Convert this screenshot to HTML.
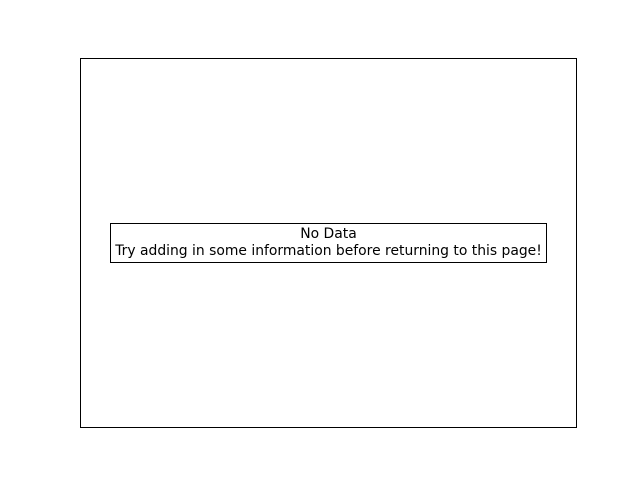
<!DOCTYPE html>
<html><head><style>
html,body{margin:0;padding:0;background:#fff;width:640px;height:480px;overflow:hidden}
.ax{position:absolute;left:80px;top:58px;width:495px;height:368px;border:1px solid #000}
.box{position:absolute;left:110px;top:223px;width:435px;height:38px;border:1px solid #000;background:#fff;
font-family:"DejaVu Sans",sans-serif;font-size:13.9px;line-height:17px;text-align:center;color:#000;white-space:nowrap}
.box div{position:relative;top:2px}
</style></head><body>
<div class="ax"></div>
<div class="box"><div>No Data<br>Try adding in some information before returning to this page!</div></div>
</body></html>
